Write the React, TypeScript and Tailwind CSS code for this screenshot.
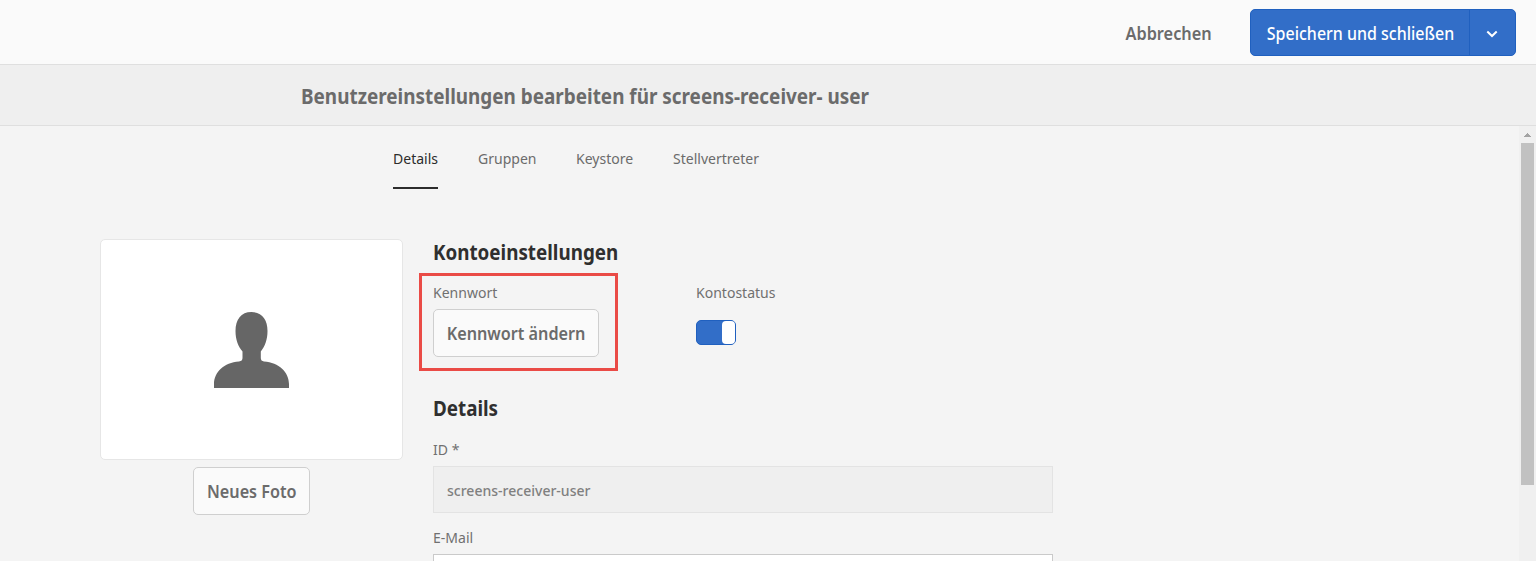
import type { ReactNode } from "react";

const tabs = [
  { label: "Details", width: "w-[45px]", active: true },
  { label: "Gruppen", width: "w-[58px]", active: false },
  { label: "Keystore", width: "w-[57px]", active: false },
  { label: "Stellvertreter", width: "w-[86px]", active: false },
];

function FieldLabel({ children }: { children: ReactNode }) {
  return (
    <span className="block h-5 w-max origin-left scale-x-[0.935] text-[15px] leading-[18px] whitespace-nowrap text-[#707070]">
      {children}
    </span>
  );
}

function SectionTitle({ children }: { children: ReactNode }) {
  return (
    <h2 className="w-max origin-left scale-x-[0.917] text-[20.5px] leading-[27px] font-bold whitespace-nowrap text-[#2f2f2f]">
      {children}
    </h2>
  );
}

function SecondaryButton({ children, className }: { children: ReactNode; className: string }) {
  return (
    <button
      className={`flex h-12 items-center justify-center rounded-[5px] border border-[#cfcfcf] bg-[#fafafa] pt-px text-[18px] font-semibold whitespace-nowrap text-[#6b6b6b] ${className}`}
    >
      <span className="scale-x-[0.9]">{children}</span>
    </button>
  );
}

export default function App() {
  return (
    <div className="flex h-[561px] w-full flex-col overflow-hidden bg-[#f4f4f4] font-['Noto_Sans','Open_Sans',sans-serif]">
      <header className="flex h-[65px] shrink-0 items-start justify-end border-b border-[#dfdfdf] bg-[#fafafa] pt-[9px] pr-5">
        <button className="mr-[38px] flex h-[47px] w-[87px] items-center justify-center pt-0.5 text-[18px] font-semibold whitespace-nowrap text-[#6b6b6b]">
          <span className="scale-x-[0.905]">Abbrechen</span>
        </button>
        <div className="flex h-[47px] w-[266px] overflow-hidden rounded-[5px] border border-[#2060bf] bg-[#326ec8] text-white">
          <button className="flex w-[218px] items-center justify-center pt-0.5 text-[18px] font-medium whitespace-nowrap">
            <span className="scale-x-[0.888]">Speichern und schließen</span>
          </button>
          <button className="flex flex-1 items-center justify-center border-l border-[#2060bf]" aria-label="Mehr">
            <svg className="mt-[3px] mr-px h-2 w-3" viewBox="0 0 12 8" fill="none" stroke="currentColor" strokeWidth="2">
              <path d="M1.3 1.5 6 6 10.7 1.5" />
            </svg>
          </button>
        </div>
      </header>
      <div className="flex h-[61px] shrink-0 items-center border-b border-[#dfdfdf] bg-[#efefef] pt-[3px] pl-[301px]">
        <h1 className="origin-left scale-x-[0.922] text-[20.5px] font-bold whitespace-nowrap text-[#6b6b6b]">
          Benutzereinstellungen bearbeiten für screens-receiver- user
        </h1>
      </div>
      <div className="flex min-h-0 flex-1">
        <main className="flex-1 overflow-hidden">
          <nav className="flex gap-10 pl-[393px]">
            {tabs.map((tab) => (
              <a
                key={tab.label}
                className={`h-[63px] border-b-2 pt-[22px] text-[15px] leading-5 whitespace-nowrap ${tab.width} ${tab.active ? "border-[#2c2c2c] text-[#2c2c2c]" : "border-transparent text-[#6b6b6b]"}`}
              >
                <span className="inline-block origin-left scale-x-[0.935]">{tab.label}</span>
              </a>
            ))}
          </nav>
          <div className="flex pt-[50px] pl-[100px]">
            <section className="flex w-[303px] shrink-0 flex-col items-center">
              <div className="flex h-[221px] w-full items-center justify-center rounded-[5px] border border-[#e6e6e6] bg-white">
                <svg className="h-[76px] w-[75px]" viewBox="0 0 75 76" fill="#666666">
                  <path d="M37.5 0C48 0 53.5 7.5 53.5 19C53.5 28 50.8 34.5 46.8 39.5V46C46.8 48 47.8 49.3 50 49.4C65 50.5 75 60 75 72V76H0V72C0 60 10 50.5 25 49.4C27.5 49.3 28.5 48 28.5 46V39.5C24.3 34.5 21.5 28 21.5 19C21.5 7.5 27 0 37.5 0Z" />
                </svg>
              </div>
              <SecondaryButton className="mt-[7px] w-[117px]">Neues Foto</SecondaryButton>
            </section>
            <section className="ml-4 w-[634px]">
              <div className="h-[34px] pl-3.5">
                <SectionTitle>Kontoeinstellungen</SectionTitle>
              </div>
              <div className="flex">
                <div className="h-[98px] w-[199px] border-3 border-[#ea4b46] pt-[7px] pl-[11px]">
                  <FieldLabel>Kennwort</FieldLabel>
                  <SecondaryButton className="mt-1.5 w-[166px]">Kennwort ändern</SecondaryButton>
                </div>
                <div className="ml-[78px] pt-2.5">
                  <FieldLabel>Kontostatus</FieldLabel>
                  <button
                    role="switch"
                    aria-checked="true"
                    className="mt-[17px] flex h-[25px] w-10 justify-end rounded-[5px] border border-[#2060bf] bg-[#326ec8]"
                  >
                    <span className="h-[23px] w-[13px] rounded-[4px] bg-white" />
                  </button>
                </div>
              </div>
              <div className="pt-6 pl-3.5">
                <SectionTitle>Details</SectionTitle>
                <div className="mt-[18px]">
                  <FieldLabel>ID *</FieldLabel>
                </div>
                <div className="mt-1.5 flex h-[47px] items-center border border-[#e3e3e3] bg-[#efefef] pt-0.5 pl-[13px] text-[15px] font-medium whitespace-nowrap text-[#808080]">
                  <span className="origin-left scale-x-[0.935]">screens-receiver-user</span>
                </div>
                <div className="mt-[15px]">
                  <FieldLabel>E-Mail</FieldLabel>
                </div>
                <div className="mt-1.5 h-[47px] border border-[#cacaca] bg-white" />
              </div>
            </section>
          </div>
        </main>
        <aside className="flex w-[17px] flex-col items-center bg-[#f0f0f0]">
          <svg className="mt-[7px] h-1 w-[7px]" viewBox="0 0 7 4" fill="#a3a3a3">
            <path d="M3 0H4V1H5V2H6V3H7V4H0V3H1V2H2V1H3Z" />
          </svg>
          <div className="mt-1.5 h-[342px] w-[13px] bg-[#c1c1c1]" />
        </aside>
      </div>
    </div>
  );
}
